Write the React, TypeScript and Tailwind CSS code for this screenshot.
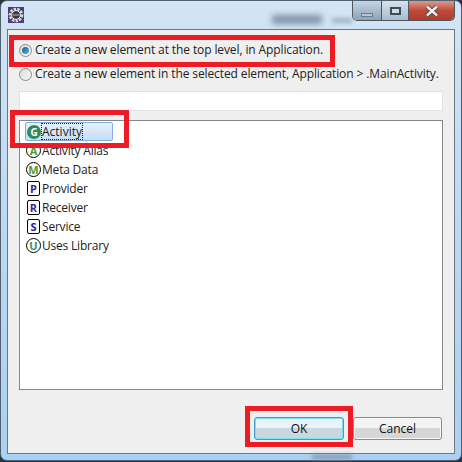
import React from 'react';

const font = "font-['Open_Sans','Noto_Sans',sans-serif]";

interface Item {
  label: string;
  letter: string;
  square?: boolean;
  color: string;
}

const items: Item[] = [
  { label: 'Activity', letter: 'G', color: '#2e8b57' },
  { label: 'Activity Alias', letter: 'A', color: '#4a9a30' },
  { label: 'Meta Data', letter: 'M', color: '#5a9a20' },
  { label: 'Provider', letter: 'P', square: true, color: '#3a1a9a' },
  { label: 'Receiver', letter: 'R', square: true, color: '#3a2a8a' },
  { label: 'Service', letter: 'S', square: true, color: '#1a1a9a' },
  { label: 'Uses Library', letter: 'U', color: '#2a9a6a' },
];

function GearIcon() {
  return (
    <div className="flex h-[16px] w-[16px] items-center justify-center bg-[#4b3f78]">
      <svg width="16" height="16" viewBox="0 0 16 16">
        <circle cx="8" cy="8" r="6" fill="none" stroke="#d8d8d8" strokeWidth="2.6" strokeDasharray="2.4 1.2" />
        <circle cx="8" cy="8" r="4.4" fill="#3a3a44" stroke="#f2f2f2" strokeWidth="1" />
        <rect x="4.8" y="7.2" width="6.4" height="1.6" fill="#8a8a92" />
      </svg>
    </div>
  );
}

function WindowControls() {
  return (
    <div className="flex h-[20px] w-[103px] overflow-hidden rounded-b-[5px] border border-t-0 border-[#50565e]">
      <div className="flex w-[29px] items-end justify-center border-r border-[#50565e] bg-gradient-to-b from-[#c5d5e5] to-[#8ba3b8] pb-[3px]">
        <div className="h-[4px] w-[12px] border border-[#6d7d8c] bg-[#b9c6d2]" />
      </div>
      <div className="flex w-[27px] items-center justify-center border-r border-[#50565e] bg-gradient-to-b from-[#d5e2ee] to-[#a9bccd]">
        <div className="h-[8px] w-[11px] border-2 border-[#3f4a55] bg-[#cfdbe6]" />
      </div>
      <div className="flex flex-1 items-center justify-center bg-gradient-to-b from-[#d79a90] via-[#c04a3a] to-[#b03a2c]">
        <svg width="14" height="12" viewBox="0 0 14 12">
          <path d="M2 1.5 L12 10.5 M12 1.5 L2 10.5" stroke="#3c3c3c" strokeWidth="4" />
          <path d="M2 1.5 L12 10.5 M12 1.5 L2 10.5" stroke="#f4f4f4" strokeWidth="2.4" />
        </svg>
      </div>
    </div>
  );
}

function Radio({ checked, label }: { checked?: boolean; label: string }) {
  return (
    <div className="flex h-[16px] items-center gap-[3px]">
      <div className="flex h-[13px] w-[13px] shrink-0 items-center justify-center rounded-full border border-[#8a8a8a] bg-gradient-to-br from-[#dcdcdc] to-[#f8f8f8]">
        {checked && <div className="h-[7px] w-[7px] rounded-full bg-gradient-to-br from-[#1b5f8c] to-[#4fb3e0]" />}
      </div>
      <span className="text-[12px] leading-[16px] tracking-[-0.11px] text-[#222] whitespace-nowrap">{label}</span>
    </div>
  );
}

function ItemIcon({ item }: { item: Item }) {
  const filled = item.label === 'Activity';
  return (
    <div
      className={
        filled
          ? 'flex h-[14px] w-[14px] shrink-0 items-center justify-center rounded-full bg-[#2e8b57] text-[10px] font-bold leading-none text-white'
          : item.square
            ? 'ml-[1px] mr-[1px] flex h-[15px] w-[13px] shrink-0 items-center justify-center rounded-[2px] border border-black bg-white text-[11px] font-bold leading-none'
            : 'flex h-[15px] w-[15px] shrink-0 items-center justify-center rounded-full border border-black bg-white text-[11px] font-bold leading-none'
      }
      style={filled ? undefined : { color: item.color }}
    >
      {item.letter}
    </div>
  );
}

function ListRow({ item }: { item: Item }) {
  const selected = item.label === 'Activity';
  return (
    <div
      className={
        selected
          ? 'flex h-[19px] w-[88px] items-center gap-[1px] rounded-[2px] border border-[#84acdd] bg-gradient-to-b from-[#e6f1fd] to-[#c6ddfa] pl-[1px]'
          : 'flex h-[19px] items-center gap-[1px] pl-[1px]'
      }
    >
      <ItemIcon item={item} />
      <span
        className={
          selected
            ? 'text-[12px] leading-[15px] text-[#222] outline-1 outline-dotted outline-[#222]'
            : 'text-[12px] leading-[15px] tracking-[-0.2px] text-[#222]'
        }
      >
        {item.label}
      </span>
    </div>
  );
}

function DialogButton({ label, primary }: { label: string; primary?: boolean }) {
  return (
    <button
      className={
        primary
          ? 'h-[23px] w-[90px] rounded-[3px] border border-[#3c9fc4] bg-gradient-to-b from-[#e9f4f9] from-50% to-[#c9d8df] to-50% text-[12px] text-[#111] shadow-[inset_0_0_0_1px_#7fdcf5]'
          : 'h-[23px] w-[89px] rounded-[3px] border border-[#8a8a8a] bg-gradient-to-b from-[#f4f4f4] from-50% to-[#d6d6d6] to-50% text-[12px] text-[#111] shadow-[inset_0_0_0_1px_#f8f8f8]'
      }
    >
      {label}
    </button>
  );
}

export default function App() {
  return (
    <div className={`relative h-[462px] w-[462px] overflow-hidden bg-[#2f3338] ${font}`}>
      {/* glass window frame */}
      <div className="flex h-[461px] w-[462px] flex-col rounded-[7px] border border-[#50606e] bg-gradient-to-b from-[#d3e5f5] via-[#bcd8f2] to-[#a9d0f5] px-[6px] pb-[6px]">
        <div className="flex h-[28px] shrink-0 items-start justify-between">
          <div className="pt-[6px] pl-[1px]">
            <GearIcon />
          </div>
          <WindowControls />
        </div>

        {/* dialog body */}
        <div className="flex flex-1 flex-col border border-[#6f7780] bg-[#efefef] pl-[11px] pr-[11px]">
          <div className="flex flex-col gap-[8px] pt-[12px]">
            <Radio checked label="Create a new element at the top level, in Application." />
            <Radio label="Create a new element in the selected element, Application > .MainActivity." />
          </div>
          <div className="mt-[9px] h-[20px] border border-[#e2e2e2] bg-white" />
          <div className="mt-[9px] flex h-[270px] flex-col border border-[#828790] bg-white pt-[1px] pl-[5px]">
            {items.map((item) => (
              <ListRow key={item.label} item={item} />
            ))}
          </div>
          <div className="mt-[27px] mr-[1px] flex justify-end gap-[9px]">
            <DialogButton primary label="OK" />
            <DialogButton label="Cancel" />
          </div>
        </div>
      </div>

      {/* blurred desktop showing through the glass */}
      <div className="absolute left-[272px] top-[15px] h-[9px] w-[50px] bg-[#7f93a8] blur-[3px]" />
      <div className="absolute left-[332px] top-[18px] h-[5px] w-[20px] bg-[#9fb3c6] blur-[2px]" />
      <div className="absolute left-[312px] top-[455px] h-[4px] w-[40px] bg-[#7f93a8] blur-[2px]" />

      {/* red annotation boxes */}
      <div className="absolute left-[9px] top-[35px] h-[32px] w-[326px] border-[5px] border-[#ed1c24]" />
      <div className="absolute left-[10px] top-[110px] h-[38px] w-[119px] border-[5px] border-[#ed1c24]" />
      <div className="absolute left-[245px] top-[406px] h-[41px] w-[108px] border-[5px] border-[#ed1c24]" />
    </div>
  );
}
